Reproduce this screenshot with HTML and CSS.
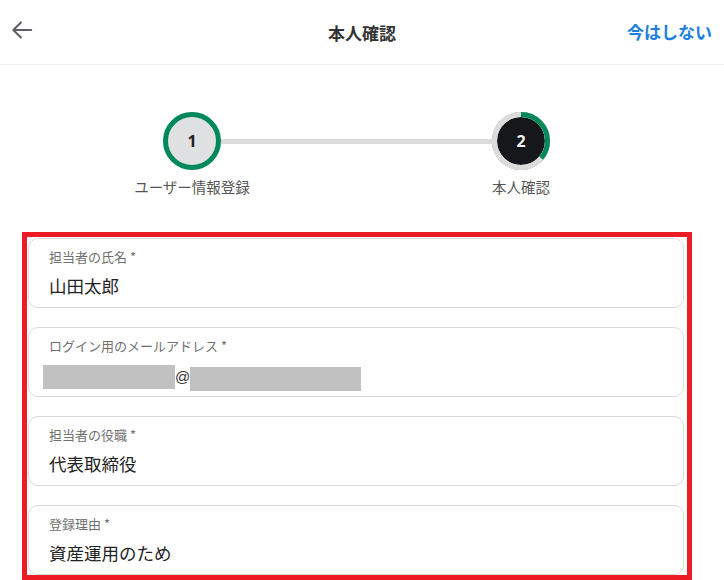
FILE: index.html
```html
<!DOCTYPE html>
<html lang="ja">
<head>
    <meta charset="UTF-8">
    <meta name="viewport" content="width=device-width, initial-scale=1.0">
    <title>本人確認</title>
    <link rel="stylesheet" href="styles.css">
</head>
<body>
    <header class="topbar">
        <button class="back" aria-label="戻る">
            <svg width="26" height="26" viewBox="0 0 24 24"><path d="M20.5 12H4M11 5l-7 7 7 7" fill="none" stroke="#5f5f68" stroke-width="1.9" stroke-linecap="round" stroke-linejoin="round"/></svg>
        </button>
        <h1 class="title">本人確認</h1>
        <a class="skip" href="#">今はしない</a>
    </header>

    <div class="stepper">
        <div class="steps">
            <div class="step done">
                <div class="circle"><span>1</span></div>
                <div class="step-label">ユーザー情報登録</div>
            </div>
            <div class="line"></div>
            <div class="step current">
                <div class="circle">
                    <svg class="ring" width="58" height="58" viewBox="0 0 58 58">
                        <circle cx="29" cy="29" r="26.5" fill="none" stroke="#dcdcdc" stroke-width="5"/>
                        <circle cx="29" cy="29" r="26.5" fill="none" stroke="#00875a" stroke-width="5" stroke-dasharray="60 200" transform="rotate(-90 29 29)"/>
                    </svg>
                    <span>2</span>
                </div>
                <div class="step-label">本人確認</div>
            </div>
        </div>
    </div>

    <div class="highlight">
        <div class="field">
            <div class="field-label">担当者の氏名 *</div>
            <div class="field-value">山田太郎</div>
        </div>
        <div class="field">
            <div class="field-label">ログイン用のメールアドレス *</div>
            <div class="field-value email">
                <span class="mask mask-user"></span><span class="at">@</span><span class="mask mask-domain"></span>
            </div>
        </div>
        <div class="field">
            <div class="field-label">担当者の役職 *</div>
            <div class="field-value">代表取締役</div>
        </div>
        <div class="field">
            <div class="field-label">登録理由 *</div>
            <div class="field-value">資産運用のため</div>
        </div>
    </div>
</body>
</html>
```

FILE: styles.css
```css
body {
    margin: 0;
    height: 580px;
    overflow: hidden;
    font-family: "Noto Sans CJK JP", "Noto Sans", sans-serif;
    background: #fff;
    color: #222;
}
.topbar {
    height: 64px;
    display: flex;
    align-items: center;
    justify-content: space-between;
    padding: 0 12px 0 9px;
    border-bottom: 1px solid #f0f0f0;
    position: relative;
}
.back {
    background: none;
    border: none;
    padding: 0;
    width: 26px;
    height: 26px;
    margin-top: -4px;
    cursor: pointer;
}
.title {
    position: absolute;
    left: 0;
    right: 0;
    text-align: center;
    margin: 0;
    font-size: 17px;
    font-weight: 700;
    color: #333;
    pointer-events: none;
}
.skip {
    color: #1a7fe0;
    font-weight: 700;
    font-size: 17px;
    text-decoration: none;
    margin-top: -2px;
}
.stepper {
    padding: 47px 0 0;
}
.steps {
    display: flex;
    align-items: flex-start;
    margin-left: 134px;
    width: 446px;
}
.step {
    display: flex;
    flex-direction: column;
    align-items: center;
    width: 118px;
}
.circle {
    width: 58px;
    height: 58px;
    border-radius: 50%;
    box-sizing: border-box;
    display: flex;
    align-items: center;
    justify-content: center;
    position: relative;
    font-family: "Open Sans", sans-serif;
    font-weight: 700;
    font-size: 16px;
}
.done .circle {
    border: 5px solid #00875a;
    background: #e0e1e3;
    color: #222;
}
.current .circle {
    background: #15171a;
    color: #eef0f4;
    box-shadow: inset 0 0 0 5px #fff;
}
.current .circle span {
    position: relative;
}
.ring {
    position: absolute;
    left: 0;
    top: 0;
}
.line {
    flex: 1;
    height: 5px;
    background: #dcdcdc;
    margin: 26.5px -30px 0;
}
.step-label {
    margin-top: 6px;
    font-size: 14.5px;
    color: #555;
    white-space: nowrap;
}
.steps .step:first-child {
    margin-left: -1px;
}
.highlight {
    margin: 35px 0 0 22px;
    width: 656px;
    border: 5px solid #ec1c24;
    padding: 1px 3px 0 1px;
    display: flex;
    flex-direction: column;
    gap: 19px;
    height: 337px;
    overflow: hidden;
}
.field {
    border: 1px solid #dadada;
    border-radius: 10px;
    height: 70px;
    box-sizing: border-box;
    padding: 9px 20px 0;
    flex-shrink: 0;
}
.field-label {
    font-size: 13px;
    color: #707070;
    line-height: 18px;
}
.field-value {
    font-size: 17.5px;
    line-height: 26px;
    margin-top: 7px;
    color: #222;
}
.email {
    display: flex;
    align-items: center;
    margin-left: -6px;
    margin-top: 8px;
}
.mask {
    display: inline-block;
    background: #c1c1c1;
    height: 24px;
}
.mask-user {
    width: 132px;
}
.mask-domain {
    width: 171px;
    margin-top: 4px;
}
.at {
    font-family: "Liberation Sans", sans-serif;
    font-size: 15px;
    width: 15px;
    color: #333;
}
```
